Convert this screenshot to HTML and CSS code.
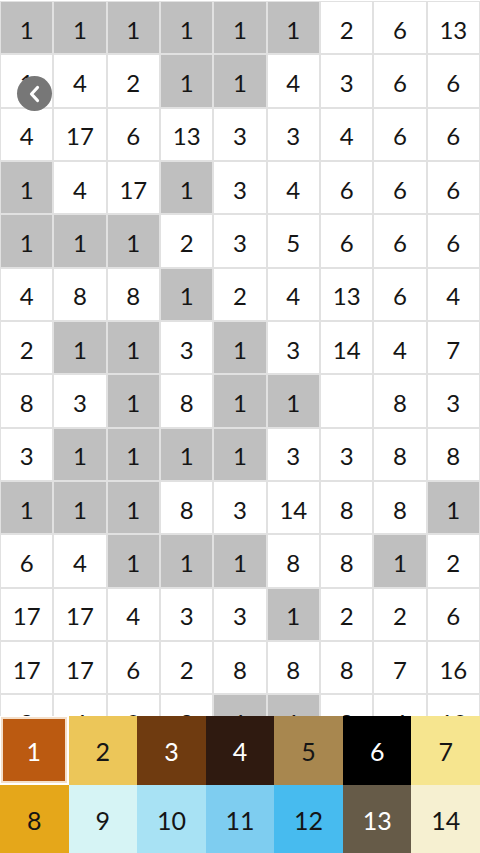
FILE: index.html
```html
<!DOCTYPE html>
<html lang="en">
<head>
    <meta charset="UTF-8">
    <meta name="viewport" content="width=device-width, initial-scale=1.0">
    <title>Color by Number</title>
    <link rel="stylesheet" href="styles.css">
</head>
<body>
    <div class="screen">
        <div class="board">
            <div class="grid" id="grid"></div>
            <button class="back-btn" aria-label="Back">
                <svg width="20" height="20" viewBox="0 0 20 20">
                    <path d="M12.5 3.5 L6.5 10 L12.5 16.5" fill="none" stroke="#fff" stroke-width="3.2" stroke-linecap="round" stroke-linejoin="round"/>
                </svg>
            </button>
        </div>

        <div class="palette" id="palette"></div>
    </div>

    <script>
        // numbers of the picture, row by row
        const rows = [
            "1 1 1 1 1 1 2 6 13",
            "1 4 2 1 1 4 3 6 6",
            "4 17 6 13 3 3 4 6 6",
            "1 4 17 1 3 4 6 6 6",
            "1 1 1 2 3 5 6 6 6",
            "4 8 8 1 2 4 13 6 4",
            "2 1 1 3 1 3 14 4 7",
            "8 3 1 8 1 1 _ 8 3",
            "3 1 1 1 1 3 3 8 8",
            "1 1 1 8 3 14 8 8 1",
            "6 4 1 1 1 8 8 1 2",
            "17 17 4 3 3 1 2 2 6",
            "17 17 6 2 8 8 8 7 16",
            "8 4 9 8 1 1 8 4 10"
        ];
        // cells of colour 1 that are not highlighted
        const plain = ["1,0"];
        const selected = "1";

        const grid = document.getElementById("grid");
        rows.forEach(function (row, r) {
            row.split(" ").forEach(function (val, c) {
                const cell = document.createElement("div");
                cell.classList.add("cell");
                if (val === selected && !plain.includes(r + "," + c)) {
                    cell.classList.add("highlight");
                }
                cell.textContent = val === "_" ? "" : val;
                grid.appendChild(cell);
            });
        });

        const colors = [
            ["#bb5a11", "light"], ["#ecc659", "dark"], ["#6f3b10", "light"], ["#2f1a10", "light"],
            ["#a8874f", "dark"], ["#000000", "light"], ["#f6e58f", "dark"], ["#e5a71a", "dark"],
            ["#d6f4f5", "dark"], ["#a8e2f4", "dark"], ["#7ecdf0", "dark"], ["#47bbef", "dark"],
            ["#665b48", "light"], ["#f6f0d1", "dark"]
        ];

        const palette = document.getElementById("palette");
        colors.forEach(function (col, i) {
            const swatch = document.createElement("div");
            swatch.classList.add("swatch", col[1]);
            if (String(i + 1) === selected) {
                swatch.classList.add("active");
            }
            swatch.style.backgroundColor = col[0];
            swatch.textContent = i + 1;
            palette.appendChild(swatch);
        });
    </script>
</body>
</html>
```

FILE: styles.css
```css
* {
    box-sizing: border-box;
}

body {
    margin: 0;
    background-color: #ffffff;
    font-family: Lato, "Open Sans", sans-serif;
    color: #151515;
}

.screen {
    width: 480px;
    height: 853px;
    display: flex;
    flex-direction: column;
    overflow: hidden;
}

.board {
    position: relative;
    flex: 1;
    overflow: hidden;
    padding-top: 1px;
}

.grid {
    display: grid;
    grid-template-columns: repeat(9, 1fr);
}

.cell {
    height: 53.33px;
    border: 1px solid #e1e1e1;
    background-color: #ffffff;
    display: flex;
    align-items: center;
    justify-content: center;
    font-size: 24px;
    padding-top: 3px;
}

.cell.highlight {
    background-color: #bfbfbf;
}

.back-btn {
    position: absolute;
    left: 17px;
    top: 76px;
    width: 35px;
    height: 35px;
    border: none;
    border-radius: 50%;
    background-color: #777777;
    padding: 0;
    display: flex;
    align-items: center;
    justify-content: center;
    cursor: pointer;
}

.palette {
    display: grid;
    grid-template-columns: repeat(7, 1fr);
    grid-auto-rows: 68.5px;
}

.swatch {
    display: flex;
    align-items: center;
    justify-content: center;
    font-size: 25px;
    padding-top: 2px;
}

.swatch.light {
    color: #ffffff;
}

.swatch.dark {
    color: #151515;
}

.swatch.active {
    border: 2px solid #f4dfca;
    margin: 1px 2px 2px 1px;
}
```
